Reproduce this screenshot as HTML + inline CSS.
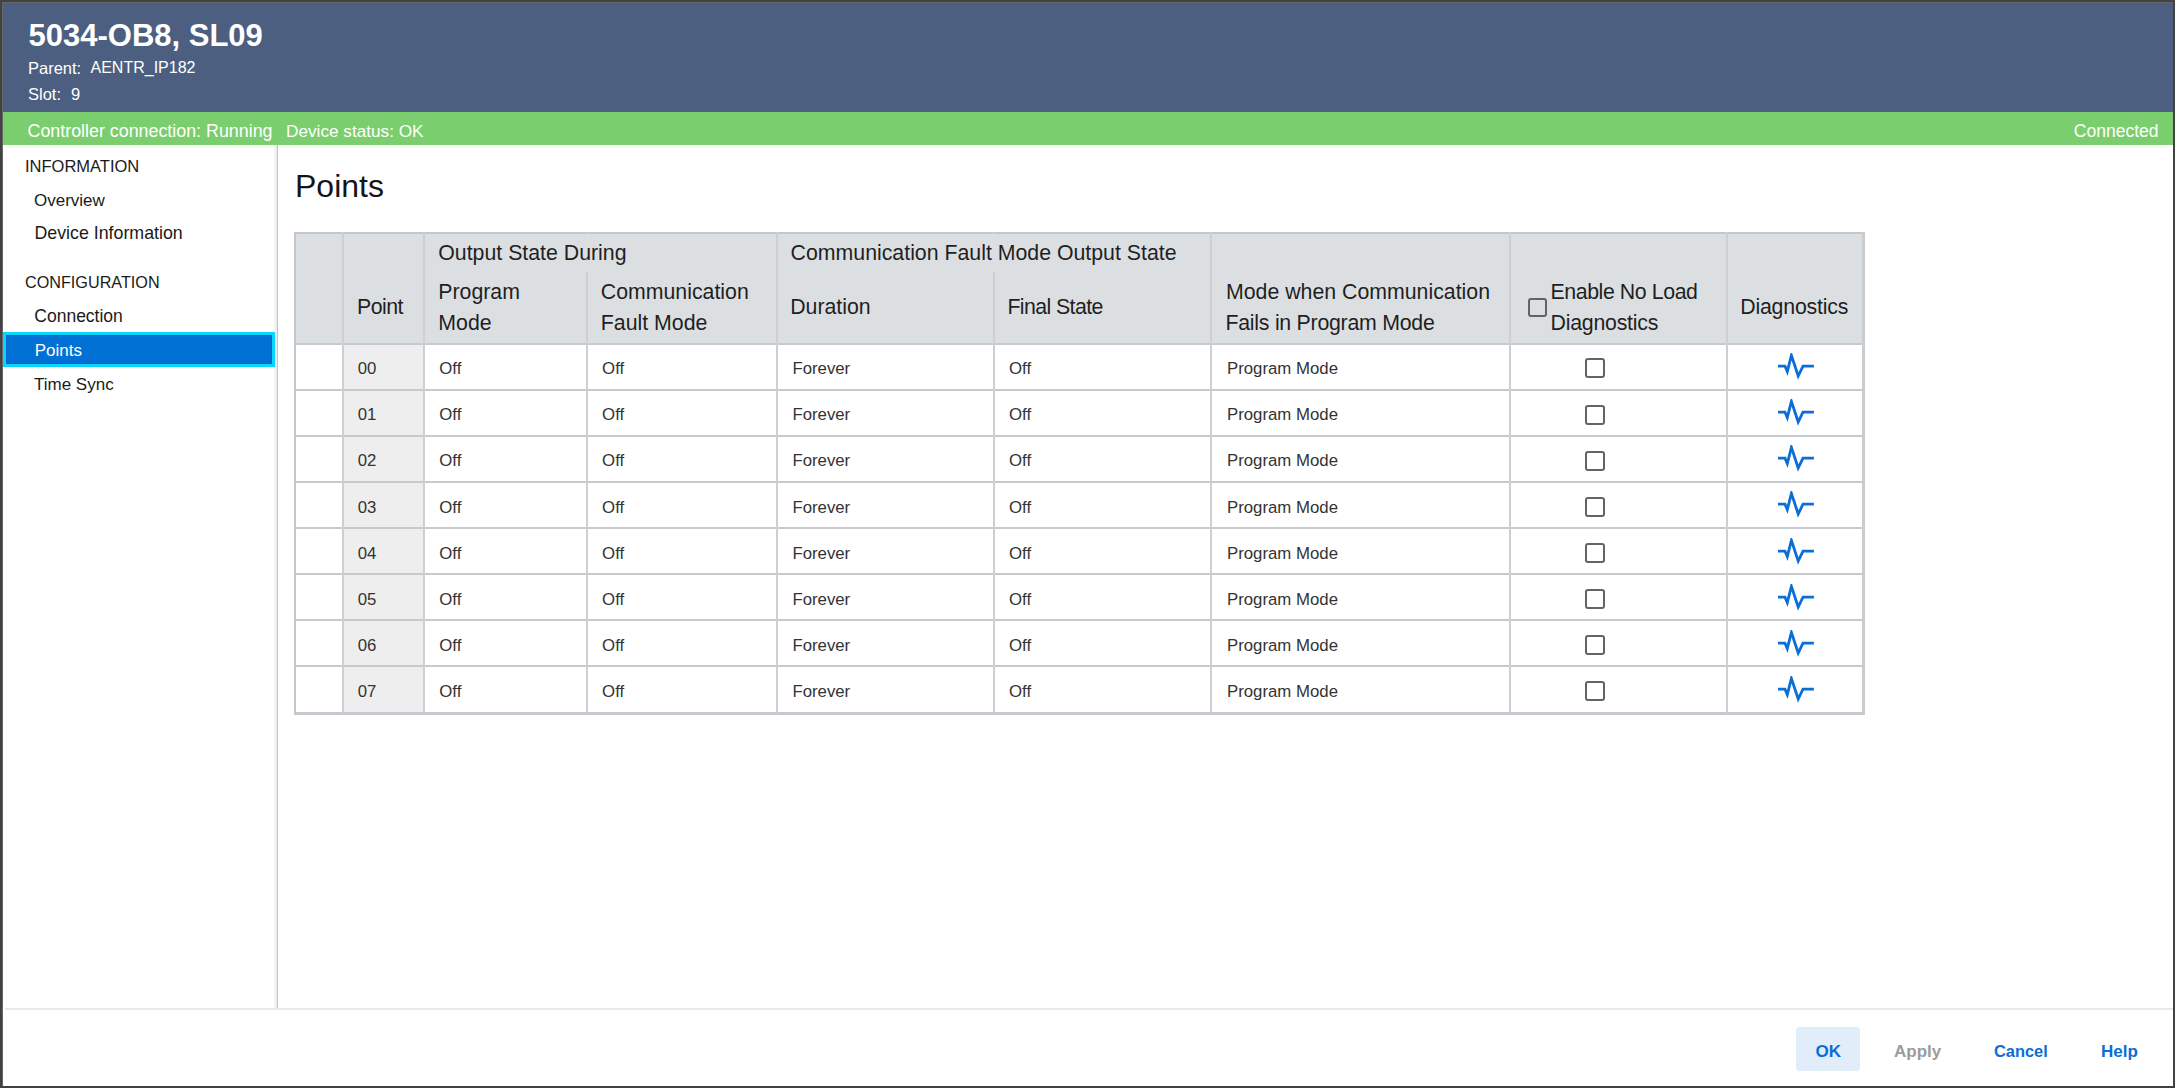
<!DOCTYPE html>
<html><head><meta charset="utf-8"><title>5034-OB8, SL09</title>
<style>
html,body{margin:0;padding:0;}
body{width:2175px;height:1088px;position:relative;overflow:hidden;background:#424242;font-family:"Liberation Sans", sans-serif;}
.t{position:absolute;white-space:pre;line-height:1;}
.r{position:absolute;}
</style></head><body>
<div class="r" style="left:2px;top:2px;width:2171px;height:1084px;background:#666666;"></div>
<div class="r" style="left:3px;top:3px;width:2170px;height:1083px;background:#ffffff;"></div>
<div class="r" style="left:3px;top:3px;width:2170px;height:109px;background:#4C5F80;"></div>
<div class="t" style="left:28.50px;top:19.56px;font-size:31px;color:#ffffff;font-weight:bold;">5034-OB8, SL09</div>
<div class="t" style="left:28.00px;top:59.83px;font-size:16.5px;color:#ffffff;font-weight:normal;">Parent:</div>
<div class="t" style="left:90.50px;top:60.26px;font-size:16px;color:#ffffff;font-weight:normal;">AENTR_IP182</div>
<div class="t" style="left:28.00px;top:86.13px;font-size:16.5px;color:#ffffff;font-weight:normal;">Slot:</div>
<div class="t" style="left:71.00px;top:86.13px;font-size:16.5px;color:#ffffff;font-weight:normal;">9</div>
<div class="r" style="left:3px;top:112px;width:2170px;height:33px;background:#7ACE6E;"></div>
<div class="t" style="left:27.50px;top:122.89px;font-size:17.85px;color:#ffffff;font-weight:normal;">Controller connection: Running</div>
<div class="t" style="left:286.00px;top:123.44px;font-size:17.2px;color:#ffffff;font-weight:normal;">Device status: OK</div>
<div class="t" style="right:16.5px;top:123.19px;font-size:17.5px;color:#fff">Connected</div>
<div class="r" style="left:273px;top:145px;width:4px;height:863px;background:linear-gradient(to right,#FFFFFF,#E6E8EC);"></div>
<div class="r" style="left:277px;top:145px;width:1px;height:863px;background:#C2C6C9;"></div>
<div class="t" style="left:25.00px;top:157.73px;font-size:16.5px;color:#1a1a1a;font-weight:normal;">INFORMATION</div>
<div class="t" style="left:34.00px;top:191.81px;font-size:17px;color:#1a1a1a;font-weight:normal;">Overview</div>
<div class="t" style="left:34.50px;top:225.23px;font-size:17.8px;color:#1a1a1a;font-weight:normal;">Device Information</div>
<div class="t" style="left:25.00px;top:274.29px;font-size:16.2px;color:#1a1a1a;font-weight:normal;">CONFIGURATION</div>
<div class="t" style="left:34.30px;top:307.99px;font-size:17.5px;color:#1a1a1a;font-weight:normal;">Connection</div>
<div class="r" style="left:3px;top:332px;width:272px;height:35px;background:#0070D4;box-sizing:border-box;border:3px solid #08D6FC;box-shadow:inset 0 0 0 1px #0062CC;"></div>
<div class="t" style="left:34.70px;top:341.51px;font-size:17px;color:#ffffff;font-weight:normal;">Points</div>
<div class="t" style="left:34.00px;top:375.91px;font-size:17px;color:#1a1a1a;font-weight:normal;">Time Sync</div>
<div class="t" style="left:295.00px;top:170.11px;font-size:32px;color:#151515;font-weight:normal;">Points</div>
<div class="r" style="left:5px;top:1008px;width:2168px;height:2px;background:#E6E9ED;"></div>
<div class="r" style="left:1796px;top:1027px;width:64px;height:44px;background:#E1EDF9;border-radius:3px;"></div>
<div class="t" style="left:1815.50px;top:1042.51px;font-size:17px;color:#0A6ED6;font-weight:bold;">OK</div>
<div class="t" style="left:1894.00px;top:1042.51px;font-size:17px;color:#9C9C9C;font-weight:bold;">Apply</div>
<div class="t" style="left:1994.00px;top:1043.02px;font-size:16.4px;color:#0A6ED6;font-weight:bold;">Cancel</div>
<div class="t" style="left:2101.00px;top:1042.51px;font-size:17px;color:#0A6ED6;font-weight:bold;">Help</div>
<div class="r" style="left:294px;top:232px;width:1571px;height:111px;background:#DCDFE2;"></div>
<div class="r" style="left:343px;top:344px;width:80px;height:368px;background:#EEEEEE;"></div>
<div class="r" style="left:294px;top:232px;width:1571px;height:2px;background:#C4C7CB;"></div>
<div class="r" style="left:294px;top:342.5px;width:1571px;height:2.0px;background:#C6C9CD;"></div>
<div class="r" style="left:294px;top:388.50px;width:1571px;height:2px;background:#C6C9CD"></div>
<div class="r" style="left:294px;top:434.65px;width:1571px;height:2px;background:#C6C9CD"></div>
<div class="r" style="left:294px;top:480.80px;width:1571px;height:2px;background:#C6C9CD"></div>
<div class="r" style="left:294px;top:526.95px;width:1571px;height:2px;background:#C6C9CD"></div>
<div class="r" style="left:294px;top:573.10px;width:1571px;height:2px;background:#C6C9CD"></div>
<div class="r" style="left:294px;top:619.25px;width:1571px;height:2px;background:#C6C9CD"></div>
<div class="r" style="left:294px;top:665.40px;width:1571px;height:2px;background:#C6C9CD"></div>
<div class="r" style="left:294px;top:711.5px;width:1571px;height:3.0px;background:#C6C9CD;"></div>
<div class="r" style="left:294px;top:232px;width:2px;height:482px;background:#C4C7CB;"></div>
<div class="r" style="left:1862px;top:232px;width:3px;height:482px;background:#CACDD0;"></div>
<div class="r" style="left:342px;top:232px;width:2px;height:482px;background:#CDD0D3"></div>
<div class="r" style="left:423px;top:232px;width:2px;height:482px;background:#CDD0D3"></div>
<div class="r" style="left:586px;top:232px;width:2px;height:482px;background:#CDD0D3"></div>
<div class="r" style="left:776px;top:232px;width:2px;height:482px;background:#CDD0D3"></div>
<div class="r" style="left:993px;top:232px;width:2px;height:482px;background:#CDD0D3"></div>
<div class="r" style="left:1210px;top:232px;width:2px;height:482px;background:#CDD0D3"></div>
<div class="r" style="left:1509px;top:232px;width:2px;height:482px;background:#CDD0D3"></div>
<div class="r" style="left:1726px;top:232px;width:2px;height:482px;background:#CDD0D3"></div>
<div class="r" style="left:585px;top:234px;width:4px;height:37.5px;background:#DCDFE2"></div>
<div class="r" style="left:992px;top:234px;width:4px;height:37.5px;background:#DCDFE2"></div>
<div class="t" style="left:438.30px;top:242.57px;font-size:21.3px;color:#1f1f1f;font-weight:normal;">Output State During</div>
<div class="t" style="left:790.60px;top:242.57px;font-size:21.3px;color:#1f1f1f;font-weight:normal;">Communication Fault Mode Output State</div>
<div class="t" style="left:357.00px;top:296.87px;font-size:21.3px;color:#1f1f1f;font-weight:normal;letter-spacing:-0.55px;">Point</div>
<div class="t" style="left:438.30px;top:281.57px;font-size:21.3px;color:#1f1f1f;font-weight:normal;">Program</div>
<div class="t" style="left:438.30px;top:312.67px;font-size:21.3px;color:#1f1f1f;font-weight:normal;">Mode</div>
<div class="t" style="left:600.80px;top:281.57px;font-size:21.3px;color:#1f1f1f;font-weight:normal;">Communication</div>
<div class="t" style="left:600.80px;top:312.67px;font-size:21.3px;color:#1f1f1f;font-weight:normal;">Fault Mode</div>
<div class="t" style="left:790.20px;top:296.67px;font-size:21.3px;color:#1f1f1f;font-weight:normal;">Duration</div>
<div class="t" style="left:1007.40px;top:296.67px;font-size:21.3px;color:#1f1f1f;font-weight:normal;letter-spacing:-0.58px;">Final State</div>
<div class="t" style="left:1226.00px;top:281.67px;font-size:21.3px;color:#1f1f1f;font-weight:normal;">Mode when Communication</div>
<div class="t" style="left:1225.50px;top:312.97px;font-size:21.3px;color:#1f1f1f;font-weight:normal;letter-spacing:-0.25px;">Fails in Program Mode</div>
<div class="t" style="left:1550.50px;top:281.67px;font-size:21.3px;color:#1f1f1f;font-weight:normal;letter-spacing:-0.41px;">Enable No Load</div>
<div class="t" style="left:1550.50px;top:312.97px;font-size:21.3px;color:#1f1f1f;font-weight:normal;letter-spacing:-0.22px;">Diagnostics</div>
<div class="t" style="left:1740.30px;top:296.67px;font-size:21.3px;color:#1f1f1f;font-weight:normal;letter-spacing:-0.21px;">Diagnostics</div>
<div class="r" style="left:1528px;top:298px;width:19px;height:19px;background:transparent;box-sizing:border-box;border:2px solid #636363;border-radius:3px;"></div>
<div class="t" style="left:357.70px;top:360.98px;font-size:16.8px;color:#333333;font-weight:normal;">00</div>
<div class="t" style="left:439.30px;top:360.98px;font-size:16.8px;color:#333333;font-weight:normal;">Off</div>
<div class="t" style="left:602.10px;top:360.98px;font-size:16.8px;color:#333333;font-weight:normal;">Off</div>
<div class="t" style="left:792.40px;top:360.98px;font-size:16.8px;color:#333333;font-weight:normal;">Forever</div>
<div class="t" style="left:1009.00px;top:360.98px;font-size:16.8px;color:#333333;font-weight:normal;">Off</div>
<div class="t" style="left:1227.00px;top:360.98px;font-size:16.8px;color:#333333;font-weight:normal;">Program Mode</div>
<div class="r" style="left:1585px;top:358.40px;width:20px;height:20px;box-sizing:border-box;border:2px solid #636363;border-radius:3px;"></div>
<svg width="40" height="30" viewBox="0 0 40 30" style="position:absolute;left:1776px;top:353.00px"><polyline points="2,13.2 9,13.2 11.3,18.6 15.4,2.4 22.2,23.0 27,13.2 37.9,13.2" fill="none" stroke="#0A6ED6" stroke-width="2.8" stroke-linejoin="miter" stroke-miterlimit="10"/></svg>
<div class="t" style="left:357.70px;top:407.16px;font-size:16.8px;color:#333333;font-weight:normal;">01</div>
<div class="t" style="left:439.30px;top:407.16px;font-size:16.8px;color:#333333;font-weight:normal;">Off</div>
<div class="t" style="left:602.10px;top:407.16px;font-size:16.8px;color:#333333;font-weight:normal;">Off</div>
<div class="t" style="left:792.40px;top:407.16px;font-size:16.8px;color:#333333;font-weight:normal;">Forever</div>
<div class="t" style="left:1009.00px;top:407.16px;font-size:16.8px;color:#333333;font-weight:normal;">Off</div>
<div class="t" style="left:1227.00px;top:407.16px;font-size:16.8px;color:#333333;font-weight:normal;">Program Mode</div>
<div class="r" style="left:1585px;top:404.55px;width:20px;height:20px;box-sizing:border-box;border:2px solid #636363;border-radius:3px;"></div>
<svg width="40" height="30" viewBox="0 0 40 30" style="position:absolute;left:1776px;top:399.15px"><polyline points="2,13.2 9,13.2 11.3,18.6 15.4,2.4 22.2,23.0 27,13.2 37.9,13.2" fill="none" stroke="#0A6ED6" stroke-width="2.8" stroke-linejoin="miter" stroke-miterlimit="10"/></svg>
<div class="t" style="left:357.70px;top:453.34px;font-size:16.8px;color:#333333;font-weight:normal;">02</div>
<div class="t" style="left:439.30px;top:453.34px;font-size:16.8px;color:#333333;font-weight:normal;">Off</div>
<div class="t" style="left:602.10px;top:453.34px;font-size:16.8px;color:#333333;font-weight:normal;">Off</div>
<div class="t" style="left:792.40px;top:453.34px;font-size:16.8px;color:#333333;font-weight:normal;">Forever</div>
<div class="t" style="left:1009.00px;top:453.34px;font-size:16.8px;color:#333333;font-weight:normal;">Off</div>
<div class="t" style="left:1227.00px;top:453.34px;font-size:16.8px;color:#333333;font-weight:normal;">Program Mode</div>
<div class="r" style="left:1585px;top:450.70px;width:20px;height:20px;box-sizing:border-box;border:2px solid #636363;border-radius:3px;"></div>
<svg width="40" height="30" viewBox="0 0 40 30" style="position:absolute;left:1776px;top:445.30px"><polyline points="2,13.2 9,13.2 11.3,18.6 15.4,2.4 22.2,23.0 27,13.2 37.9,13.2" fill="none" stroke="#0A6ED6" stroke-width="2.8" stroke-linejoin="miter" stroke-miterlimit="10"/></svg>
<div class="t" style="left:357.70px;top:499.52px;font-size:16.8px;color:#333333;font-weight:normal;">03</div>
<div class="t" style="left:439.30px;top:499.52px;font-size:16.8px;color:#333333;font-weight:normal;">Off</div>
<div class="t" style="left:602.10px;top:499.52px;font-size:16.8px;color:#333333;font-weight:normal;">Off</div>
<div class="t" style="left:792.40px;top:499.52px;font-size:16.8px;color:#333333;font-weight:normal;">Forever</div>
<div class="t" style="left:1009.00px;top:499.52px;font-size:16.8px;color:#333333;font-weight:normal;">Off</div>
<div class="t" style="left:1227.00px;top:499.52px;font-size:16.8px;color:#333333;font-weight:normal;">Program Mode</div>
<div class="r" style="left:1585px;top:496.85px;width:20px;height:20px;box-sizing:border-box;border:2px solid #636363;border-radius:3px;"></div>
<svg width="40" height="30" viewBox="0 0 40 30" style="position:absolute;left:1776px;top:491.45px"><polyline points="2,13.2 9,13.2 11.3,18.6 15.4,2.4 22.2,23.0 27,13.2 37.9,13.2" fill="none" stroke="#0A6ED6" stroke-width="2.8" stroke-linejoin="miter" stroke-miterlimit="10"/></svg>
<div class="t" style="left:357.70px;top:545.70px;font-size:16.8px;color:#333333;font-weight:normal;">04</div>
<div class="t" style="left:439.30px;top:545.70px;font-size:16.8px;color:#333333;font-weight:normal;">Off</div>
<div class="t" style="left:602.10px;top:545.70px;font-size:16.8px;color:#333333;font-weight:normal;">Off</div>
<div class="t" style="left:792.40px;top:545.70px;font-size:16.8px;color:#333333;font-weight:normal;">Forever</div>
<div class="t" style="left:1009.00px;top:545.70px;font-size:16.8px;color:#333333;font-weight:normal;">Off</div>
<div class="t" style="left:1227.00px;top:545.70px;font-size:16.8px;color:#333333;font-weight:normal;">Program Mode</div>
<div class="r" style="left:1585px;top:543.00px;width:20px;height:20px;box-sizing:border-box;border:2px solid #636363;border-radius:3px;"></div>
<svg width="40" height="30" viewBox="0 0 40 30" style="position:absolute;left:1776px;top:537.60px"><polyline points="2,13.2 9,13.2 11.3,18.6 15.4,2.4 22.2,23.0 27,13.2 37.9,13.2" fill="none" stroke="#0A6ED6" stroke-width="2.8" stroke-linejoin="miter" stroke-miterlimit="10"/></svg>
<div class="t" style="left:357.70px;top:591.88px;font-size:16.8px;color:#333333;font-weight:normal;">05</div>
<div class="t" style="left:439.30px;top:591.88px;font-size:16.8px;color:#333333;font-weight:normal;">Off</div>
<div class="t" style="left:602.10px;top:591.88px;font-size:16.8px;color:#333333;font-weight:normal;">Off</div>
<div class="t" style="left:792.40px;top:591.88px;font-size:16.8px;color:#333333;font-weight:normal;">Forever</div>
<div class="t" style="left:1009.00px;top:591.88px;font-size:16.8px;color:#333333;font-weight:normal;">Off</div>
<div class="t" style="left:1227.00px;top:591.88px;font-size:16.8px;color:#333333;font-weight:normal;">Program Mode</div>
<div class="r" style="left:1585px;top:589.15px;width:20px;height:20px;box-sizing:border-box;border:2px solid #636363;border-radius:3px;"></div>
<svg width="40" height="30" viewBox="0 0 40 30" style="position:absolute;left:1776px;top:583.75px"><polyline points="2,13.2 9,13.2 11.3,18.6 15.4,2.4 22.2,23.0 27,13.2 37.9,13.2" fill="none" stroke="#0A6ED6" stroke-width="2.8" stroke-linejoin="miter" stroke-miterlimit="10"/></svg>
<div class="t" style="left:357.70px;top:638.06px;font-size:16.8px;color:#333333;font-weight:normal;">06</div>
<div class="t" style="left:439.30px;top:638.06px;font-size:16.8px;color:#333333;font-weight:normal;">Off</div>
<div class="t" style="left:602.10px;top:638.06px;font-size:16.8px;color:#333333;font-weight:normal;">Off</div>
<div class="t" style="left:792.40px;top:638.06px;font-size:16.8px;color:#333333;font-weight:normal;">Forever</div>
<div class="t" style="left:1009.00px;top:638.06px;font-size:16.8px;color:#333333;font-weight:normal;">Off</div>
<div class="t" style="left:1227.00px;top:638.06px;font-size:16.8px;color:#333333;font-weight:normal;">Program Mode</div>
<div class="r" style="left:1585px;top:635.30px;width:20px;height:20px;box-sizing:border-box;border:2px solid #636363;border-radius:3px;"></div>
<svg width="40" height="30" viewBox="0 0 40 30" style="position:absolute;left:1776px;top:629.90px"><polyline points="2,13.2 9,13.2 11.3,18.6 15.4,2.4 22.2,23.0 27,13.2 37.9,13.2" fill="none" stroke="#0A6ED6" stroke-width="2.8" stroke-linejoin="miter" stroke-miterlimit="10"/></svg>
<div class="t" style="left:357.70px;top:684.24px;font-size:16.8px;color:#333333;font-weight:normal;">07</div>
<div class="t" style="left:439.30px;top:684.24px;font-size:16.8px;color:#333333;font-weight:normal;">Off</div>
<div class="t" style="left:602.10px;top:684.24px;font-size:16.8px;color:#333333;font-weight:normal;">Off</div>
<div class="t" style="left:792.40px;top:684.24px;font-size:16.8px;color:#333333;font-weight:normal;">Forever</div>
<div class="t" style="left:1009.00px;top:684.24px;font-size:16.8px;color:#333333;font-weight:normal;">Off</div>
<div class="t" style="left:1227.00px;top:684.24px;font-size:16.8px;color:#333333;font-weight:normal;">Program Mode</div>
<div class="r" style="left:1585px;top:681.45px;width:20px;height:20px;box-sizing:border-box;border:2px solid #636363;border-radius:3px;"></div>
<svg width="40" height="30" viewBox="0 0 40 30" style="position:absolute;left:1776px;top:676.05px"><polyline points="2,13.2 9,13.2 11.3,18.6 15.4,2.4 22.2,23.0 27,13.2 37.9,13.2" fill="none" stroke="#0A6ED6" stroke-width="2.8" stroke-linejoin="miter" stroke-miterlimit="10"/></svg>
</body></html>
